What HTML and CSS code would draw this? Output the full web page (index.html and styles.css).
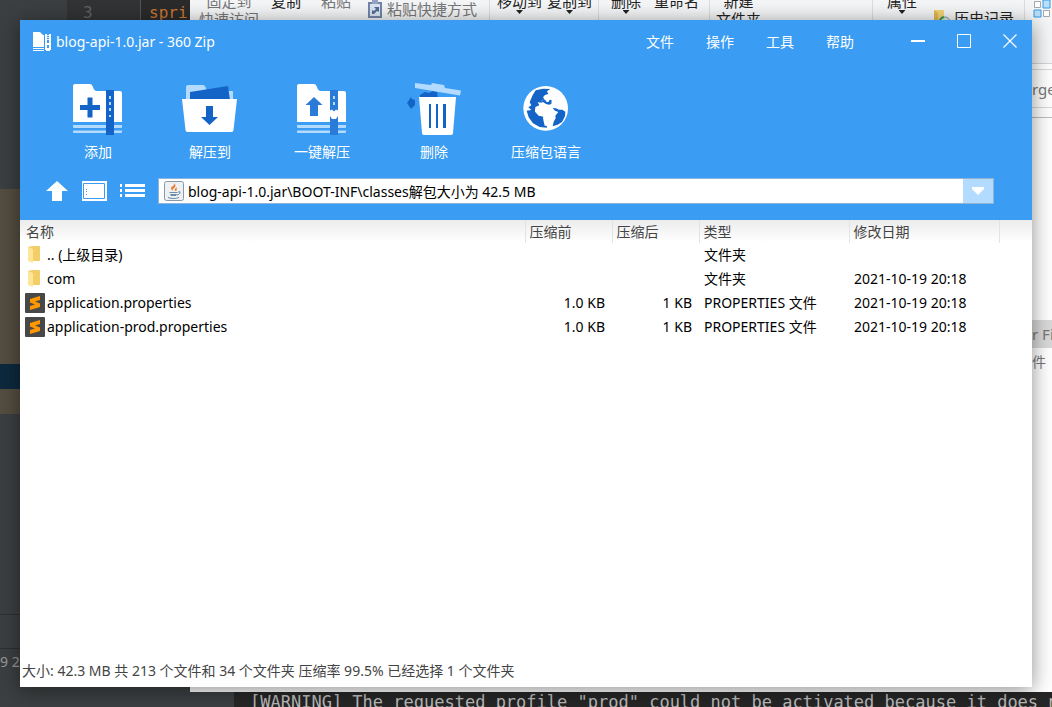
FILE: index.html
```html
<!DOCTYPE html>
<html lang="zh-CN">
<head>
<meta charset="utf-8">
<title>blog-api-1.0.jar - 360 Zip</title>
<link rel="stylesheet" href="styles.css">
</head>
<body>
<div class="desktop">

  <div class="ide" aria-hidden="true">
    <div class="ide-editor"><span class="ide-line">3</span><span class="ide-code">spri</span></div>
    <div class="ide-side">
      <div class="ide-brown"></div>
      <div class="ide-selected"></div>
      <div class="ide-brown-end"></div>
      <div class="ide-panel"></div>
      <div class="ide-strip"></div>
      <div class="ide-status">9 2</div>
    </div>
    <div class="console">[WARNING] The requested profile "prod" could not be activated because it does not</div>
  </div>

  <div class="explorer" aria-hidden="true">
    <div class="ribbon">
      <div class="group g-clip">
        <div class="cmd cmd-pin">固定到<br>快速访问</div>
        <div class="cmd cmd-copy strong">复制</div>
        <div class="cmd">粘贴</div>
        <div class="cmd-row">
          <svg class="ic-paste" viewBox="0 0 14 18"><path d="M0 2h14v16H0z" fill="#7387ab"/><path d="M2 4h10v12H2z" fill="#dde6f2"/><path d="M4 0h6v4H4z" fill="#93a5c2"/><path d="M4 14V10l2 1 2-2-2-2h5v5l-2-1-3 3z" fill="#526d9a"/></svg>
          <span>粘贴快捷方式</span>
        </div>
      </div>
      <div class="group g-move strong">
        <div class="cmd">移动到<i class="caret"></i></div>
        <div class="cmd">复制到<i class="caret"></i></div>
      </div>
      <div class="group g-del strong">
        <div class="cmd">删除<i class="caret"></i></div>
        <div class="cmd">重命名</div>
      </div>
      <div class="group g-new strong">
        <div class="cmd">新建<br>文件夹</div>
      </div>
      <div class="group g-prop strong">
        <div class="cmd">属性<i class="caret"></i></div>
        <div class="cmd-row cmd-history">
          <svg class="ic-history" viewBox="0 0 17 18"><path d="M0 1h10v17H0z" fill="#f5d477"/><path d="M0 1l4 3v14H0z" fill="#e5b94f"/><circle cx="11" cy="13" r="5" fill="#dfe8e4" stroke="#8b9994"/><path d="M6 13a5 5 0 0 1 4-5" stroke="#3b9b48" stroke-width="2" fill="none"/></svg>
          <span>历史记录</span>
        </div>
      </div>
      <div class="group g-select">
        <svg class="ic-select" viewBox="0 0 18 18"><path d="M1.500 1.500h6v6h-6zM10.500 10.500h6v6h-6z" fill="#fff" stroke="#a8a8a8"/><path d="M10 0h7v8h-7zM1 10h7v7H1z" fill="#b9dffb" stroke="#3399e6"/></svg>
      </div>
    </div>
    <div class="explorer-side">
      <div class="side-search">rge</div>
      <div class="side-list">
        <div class="side-head">r Fi</div>
        <div class="side-item">件</div>
      </div>
    </div>
  </div>

  <main class="window">
    <header class="top">
      <div class="titlebar">
        <svg class="app-icon" viewBox="0 0 19 19"><path d="M0 0h7l3 3h1v12H0z" fill="#fff"/><path d="M0 16h11v1H0zM0 18h11v1H0z" fill="#fff"/><path d="M12 2h2v16h-2zM16 2h2v16h-2z" fill="#fff"/><path d="M14 3h2v1h-2zM14 5h2v1h-2zM14 7h2v1h-2z" fill="#d5ebff"/><path d="M13 11h4v8h-4z" fill="#fff"/><path d="M14 13h2v3h-2z" fill="#3a9cf2"/></svg>
        <h1 class="title">blog-api-1.0.jar - 360 Zip</h1>
        <nav class="menu">
          <button type="button">文件</button>
          <button type="button">操作</button>
          <button type="button">工具</button>
          <button type="button">帮助</button>
        </nav>
        <div class="controls">
          <button type="button" aria-label="最小化"><svg viewBox="0 0 16 16"><path d="M1 7h14v2H1z" fill="#fff"/></svg></button>
          <button type="button" aria-label="最大化"><svg viewBox="0 0 16 16"><path d="M1.500 1.500h13v13h-13z" fill="none" stroke="#fff"/></svg></button>
          <button type="button" aria-label="关闭"><svg viewBox="0 0 16 16"><path d="M1.500 1.500l13 13M14.500 1.500l-13 13" fill="none" stroke="#fff" stroke-width="1.200"/></svg></button>
        </div>
      </div>

      <div class="toolbar">
        <button type="button" class="tool">
          <svg viewBox="0 0 56 56"><path d="M3 4q0-2 2-2h15q2 0 3 3 1 4 4 4h23q2 0 2 2v29H3z" fill="#fff"/><path d="M3 43h49v2q0 1-1 1H4q-1 0-1-1zM3 48.500h49V50q0 1-1 1H4q-1 0-1-1z" fill="#b3dbff"/><path d="M36 8h8v45h-8z" fill="#1464c8"/><path d="M39 14h2v3h-2zM39 20h2v3h-2zM39 26h2v3h-2zM39 33h2v2h-2z" fill="#b3dbff"/><path d="M17.500 15.500h5v7.500h7.500v5h-7.500v7.500h-5V28H10v-5h7.500z" fill="#1464c8"/></svg>
          <span>添加</span>
        </button>
        <button type="button" class="tool">
          <svg viewBox="0 0 56 56"><path d="M4 5q0-2 2-2h15q2 0 3 3 0 3 2 3h24q1 0 1 1v8H4z" fill="#b3dbff"/><path d="M8 10l38-6 2 14H8z" fill="#1464c8"/><path d="M0 17h55l-3.500 31q0 2-2 2h-44q-2 0-2-2z" fill="#fff"/><path d="M24 24h7v11h5l-8.500 8L19 35h5z" fill="#1464c8"/></svg>
          <span>解压到</span>
        </button>
        <button type="button" class="tool">
          <svg viewBox="0 0 56 56"><path d="M3 4q0-2 2-2h15q2 0 3 3 1 4 4 4h23q2 0 2 2v29H3z" fill="#fff"/><path d="M3 43h49v2q0 1-1 1H4q-1 0-1-1zM3 48.500h49V50q0 1-1 1H4q-1 0-1-1z" fill="#b3dbff"/><path d="M36 8h8v20.500l-2-1-2 2-2-2-2 1zM36 34l2 3h4l2-3v19h-8z" fill="#2a7ad8"/><path d="M39 14h2v3h-2zM39 20h2v3h-2z" fill="#b3dbff"/><path d="M20 15l8.500 8H24v11h-8V23h-4.500z" fill="#2a7ad8"/></svg>
          <span>一键解压</span>
        </button>
        <button type="button" class="tool">
          <svg viewBox="0 0 56 56"><path d="M1 21l4-6 1 2 3 1v5l-4 4-2-3z" fill="#1464c8"/><path d="M14 16v-3l5-3 4 1 4-2 4 1 1 6z" fill="#1464c8"/><path d="M9 1l16 2 1-2 12 2 1 3 16 2.500-1 5L9 6z" fill="#b3dbff"/><path d="M13 15h37l-3 36q0 2-2 2H18q-2 0-2-2z" fill="#fff"/><path d="M23 22h2v24h-2zM30 22h2v24h-2zM37 22h3v24h-3z" fill="#1464c8"/></svg>
          <span>删除</span>
        </button>
        <button type="button" class="tool">
          <svg viewBox="9 12 168 168"><circle cx="92" cy="91" r="67" fill="#fff"/><path d="M62 37l22-5 22 1-10 7 4 8-10 3-6 7 6 9-8-2-6 9-8-2 5 10-12 5 1 11 14 2 10 10-2 12 10 7 2 20-22-2-20-11-13-18-6-20 14-2-9-8 9-6-5-9 8-20z" fill="#1464c8"/><path d="M84 66l8 1 3 6 6-2 3-6 6 2-1 11-7 2-9-2-9-6-7 3 2-6z" fill="#1464c8"/><path d="M113 90l10 1 9 4 10 0 9 6-1 14-9 17-13 8-15 5 3-14 6-10-1-8 9-11-10-4z" fill="#1464c8"/><path d="M60 92l14-9 16 3 20 3 6 12 6 5-9 12-2 12-13 14-9-1-4-17 1-10-15-3-11-12z" fill="#fff"/></svg>
          <span>压缩包语言</span>
        </button>
      </div>

      <div class="navrow">
        <button type="button" class="nav-btn nav-up" aria-label="上级目录"><svg viewBox="0 0 22 20"><path d="M11 0l11 10h-6v10H6V10H0z" fill="#fff"/></svg></button>
        <button type="button" class="nav-btn nav-view" aria-label="视图"><svg viewBox="0 0 25 20"><path d="M0 0h25v20H0z" fill="#fff"/><path d="M1.500 2.500h21v15h-21z" fill="none" stroke="#3a9cf2"/><path d="M4 8h1v1H4zM4 10h1v1H4zM4 13h1v1H4z" fill="#3a9cf2"/></svg></button>
        <button type="button" class="nav-btn nav-list" aria-label="列表"><svg viewBox="0 0 25 14"><path d="M0 0h2v3H0zM5 0h20v3H5zM0 5h2v3H0zM5 5h20v3H5zM0 10h2v3H0zM5 10h20v3H5z" fill="#fff"/></svg></button>
        <div class="address">
          <svg class="java" viewBox="0 0 20 20"><rect x=".5" y=".5" width="19" height="19" rx="2" fill="#eef1f4" stroke="#8a98a6"/><path d="M9 10q-4-3 0-5 2-1 1-3 3 3 0 5-2 1-1 3zM11 10q-1-2 2-4-1 2 0 3-1 1-2 1z" fill="#ee7a30"/><path d="M5 11h9l-1 1H6zM6 13h7l-1 2H7zM4 16q6 2 11 0v1q-6 2-11 0z" fill="#6b8ba8"/><path d="M14 11q3-1 2 1t-3 2" fill="none" stroke="#6b8ba8"/></svg>
          <input type="text" aria-label="路径" value="blog-api-1.0.jar\BOOT-INF\classes解包大小为 42.5 MB">
          <button type="button" class="drop" aria-label="展开"><svg viewBox="0 0 12 8"><path d="M0 0h12v2L6 8 0 2z" fill="#fff"/></svg></button>
        </div>
      </div>
    </header>

    <div class="list">
      <table class="files">
        <colgroup><col><col class="c-size"><col class="c-size"><col class="c-wide"><col class="c-wide"><col class="c-rest"></colgroup>
        <thead>
          <tr><th>名称</th><th>压缩前</th><th>压缩后</th><th>类型</th><th>修改日期</th><th></th></tr>
        </thead>
        <tbody>
          <tr><td><div class="name"><svg viewBox="0 0 20 20"><path d="M3 2l4-1h7q1 0 1 1v14H7z" fill="#f2cd68"/><path d="M3 2l5 2v14l-5-2z" fill="#ffe596"/></svg>.. (上级目录)</div></td><td></td><td></td><td>文件夹</td><td></td><td></td></tr>
          <tr><td><div class="name"><svg viewBox="0 0 20 20"><path d="M3 2l4-1h7q1 0 1 1v14H7z" fill="#f2cd68"/><path d="M3 2l5 2v14l-5-2z" fill="#ffe596"/></svg>com</div></td><td></td><td></td><td>文件夹</td><td>2021-10-19 20:18</td><td></td></tr>
          <tr><td><div class="name"><svg viewBox="0 0 20 20"><rect width="20" height="20" rx="1" fill="#484848"/><path d="M5 6l10-3v4L10 8.500l5 2V14L5 17v-4l5-1.500-5-2z" fill="#ff9800"/></svg>application.properties</div></td><td class="num">1.0 KB</td><td class="num">1 KB</td><td>PROPERTIES 文件</td><td>2021-10-19 20:18</td><td></td></tr>
          <tr><td><div class="name"><svg viewBox="0 0 20 20"><rect width="20" height="20" rx="1" fill="#484848"/><path d="M5 6l10-3v4L10 8.500l5 2V14L5 17v-4l5-1.500-5-2z" fill="#ff9800"/></svg>application-prod.properties</div></td><td class="num">1.0 KB</td><td class="num">1 KB</td><td>PROPERTIES 文件</td><td>2021-10-19 20:18</td><td></td></tr>
        </tbody>
      </table>
    </div>
    <footer class="status">大小: 42.3 MB 共 213 个文件和 34 个文件夹 压缩率 99.5% 已经选择 1 个文件夹</footer>
  </main>
</div>
</body>
</html>
```
FILE: styles.css
```css
* { box-sizing: border-box; }
body {
  margin: 0;
  font-family: "Noto Sans", "Noto Sans CJK SC", sans-serif;
  font-size: 14px;
  color: #000;
}
button {
  border: 0;
  padding: 0;
  background: none;
  color: inherit;
  font: inherit;
}
svg { display: block; flex: none; }

.desktop {
  position: relative;
  height: 100vh;
  overflow: hidden;
  background: #3c3f41;
}

/* editor window at the back */
.ide { position: absolute; inset: 0; }
.ide-editor {
  position: absolute;
  inset: 0 auto auto 67px;
  display: flex;
  width: 130px;
  height: 189px;
  background: #2b2b2b;
  font: 16px/26px "DejaVu Sans Mono", monospace;
}
.ide-line { flex: none; width: 74px; padding-left: 16px; color: #606366; border-right: 1px solid #555; background: #313335; }
.ide-code { padding-left: 8px; color: #cc7832; }
.ide-side { display: flex; flex-direction: column; width: 190px; height: 100%; padding-top: 189px; }
.ide-brown { height: 175px; background: #544d40; }
.ide-selected { height: 25px; background: #0d293e; }
.ide-brown-end { height: 25px; background: #544d40; }
.ide-panel { flex: 1; }
.ide-strip { height: 35px; border: solid #2f2f2f; border-width: 1px 0; }
.ide-status { height: 58px; color: #9a9a9a; line-height: 26px; }
.console {
  position: absolute;
  inset: auto 0 0 234px;
  height: 15px;
  padding-left: 16px;
  overflow: hidden;
  white-space: nowrap;
  background: #262626;
  color: #bbb;
  font: 17px/20px "DejaVu Sans Mono", monospace;
}

/* file manager behind the archive window */
.explorer {
  position: absolute;
  inset: 0 0 15px 190px;
  overflow: hidden;
  background: #fff;
  font-size: 15px;
  line-height: 18px;
  color: #777;
}
.ribbon {
  display: flex;
  height: 64px;
  background: #f5f6f7;
  border-bottom: 1px solid #d5d5d5;
  white-space: nowrap;
}
.strong { color: #222; }
.group { display: flex; border-right: 1px solid #dcdddf; }
.group:last-child { border: 0; }
.cmd { margin-top: -8px; text-align: center; }
.cmd-row { display: flex; gap: 5px; }
.g-clip { width: 300px; padding-left: 9px; }
.cmd-pin { width: 60px; margin-right: 12px; }
.cmd-copy { margin-right: 20px; }
.g-clip .cmd-row { margin-left: 17px; }
.g-move { width: 109px; padding-left: 7px; gap: 5px; }
.g-del { width: 111px; padding-left: 12px; gap: 13px; }
.g-new { width: 163px; padding-left: 6px; }
.g-prop { width: 152px; padding-left: 14px; gap: 17px; }
.g-select { padding-left: 8px; }
.cmd-history { gap: 3px; padding-top: 9px; }
.caret { display: block; width: 7px; height: 4px; margin: 0 auto; background: #222; clip-path: polygon(0 0, 100% 0, 50% 100%); }
.ic-paste { width: 14px; height: 18px; }
.ic-history { width: 17px; height: 18px; }
.ic-select { width: 18px; height: 18px; }
.explorer-side { width: 20px; margin-left: auto; white-space: nowrap; }
.side-search { height: 39px; margin-top: 5px; line-height: 38px; border: solid #d9d9d9; border-width: 1px 0; }
.side-list { margin-top: 9px; padding-top: 202px; border-top: 1px solid #bdbdbd; }
.side-head { height: 28px; line-height: 28px; background: #d9d9d9; }
.side-item { line-height: 28px; font-size: 14px; }

/* archive window */
.window {
  position: absolute;
  inset: 20px;
  display: flex;
  flex-direction: column;
  background: #fff;
  box-shadow: 0 3px 20px rgba(0, 0, 0, .45);
}
.top { padding-bottom: 16px; background: #3a9cf2; color: #fff; }
.titlebar { display: flex; align-items: center; height: 42px; padding-left: 13px; }
.app-icon { width: 19px; height: 19px; }
.title { margin: 0 auto 0 4px; font-size: 14px; font-weight: 400; }
.menu { display: flex; margin-right: 25px; }
.menu button { width: 60px; height: 32px; }
.controls { display: flex; margin-right: -1px; }
.controls button { display: grid; place-items: center; width: 46px; height: 40px; }
.controls svg { width: 16px; height: 16px; }

.toolbar { display: flex; padding: 20px 22px 0; }
.tool { display: flex; flex-direction: column; align-items: center; width: 112px; }
.tool svg { width: 56px; height: 56px; }
.tool span { line-height: 20px; margin-top: 4px; }

.navrow { display: flex; align-items: center; height: 26px; margin-top: 16px; padding: 0 38px 0 26px; }
.nav-up { width: 22px; margin-right: 14px; }
.nav-view { width: 25px; margin-right: 13px; }
.nav-list { width: 25px; margin-right: 13px; }
.address {
  display: flex;
  flex: 1;
  align-items: center;
  height: 26px;
  padding-left: 5px;
  background: #fff;
  border: 1px solid #8fb4d8;
}
.java { width: 20px; height: 20px; }
.address input {
  flex: 1;
  min-width: 0;
  height: 24px;
  padding: 0 0 0 4px;
  border: 0;
  outline: 0;
  background: none;
  color: #000;
  font: inherit;
}
.drop { display: grid; place-items: center; width: 30px; height: 24px; background: #b3dbff; }
.drop svg { width: 12px; height: 8px; }

.list { flex: 1; background: linear-gradient(#ececec, #fff 22px); }
.files { width: 100%; table-layout: fixed; border-collapse: collapse; }
.c-size { width: 87px; }
.c-wide { width: 150px; }
.c-rest { width: 33px; }
.files th {
  height: 23px;
  padding: 0 0 0 4px;
  text-align: left;
  font-weight: 400;
  line-height: 22px;
  color: #444;
  border-left: 1px solid #e1e3e8;
}
.files th:first-child { border-left: 0; padding-left: 6px; }
.files td { height: 24px; padding: 0 0 0 5px; line-height: 24px; white-space: nowrap; }
.files td.num { padding: 0 7px 0 0; text-align: right; }
.name { display: flex; align-items: center; gap: 2px; }
.name svg { width: 20px; height: 20px; }
.status { height: 32px; padding-left: 2px; line-height: 32px; color: #444; }
```
